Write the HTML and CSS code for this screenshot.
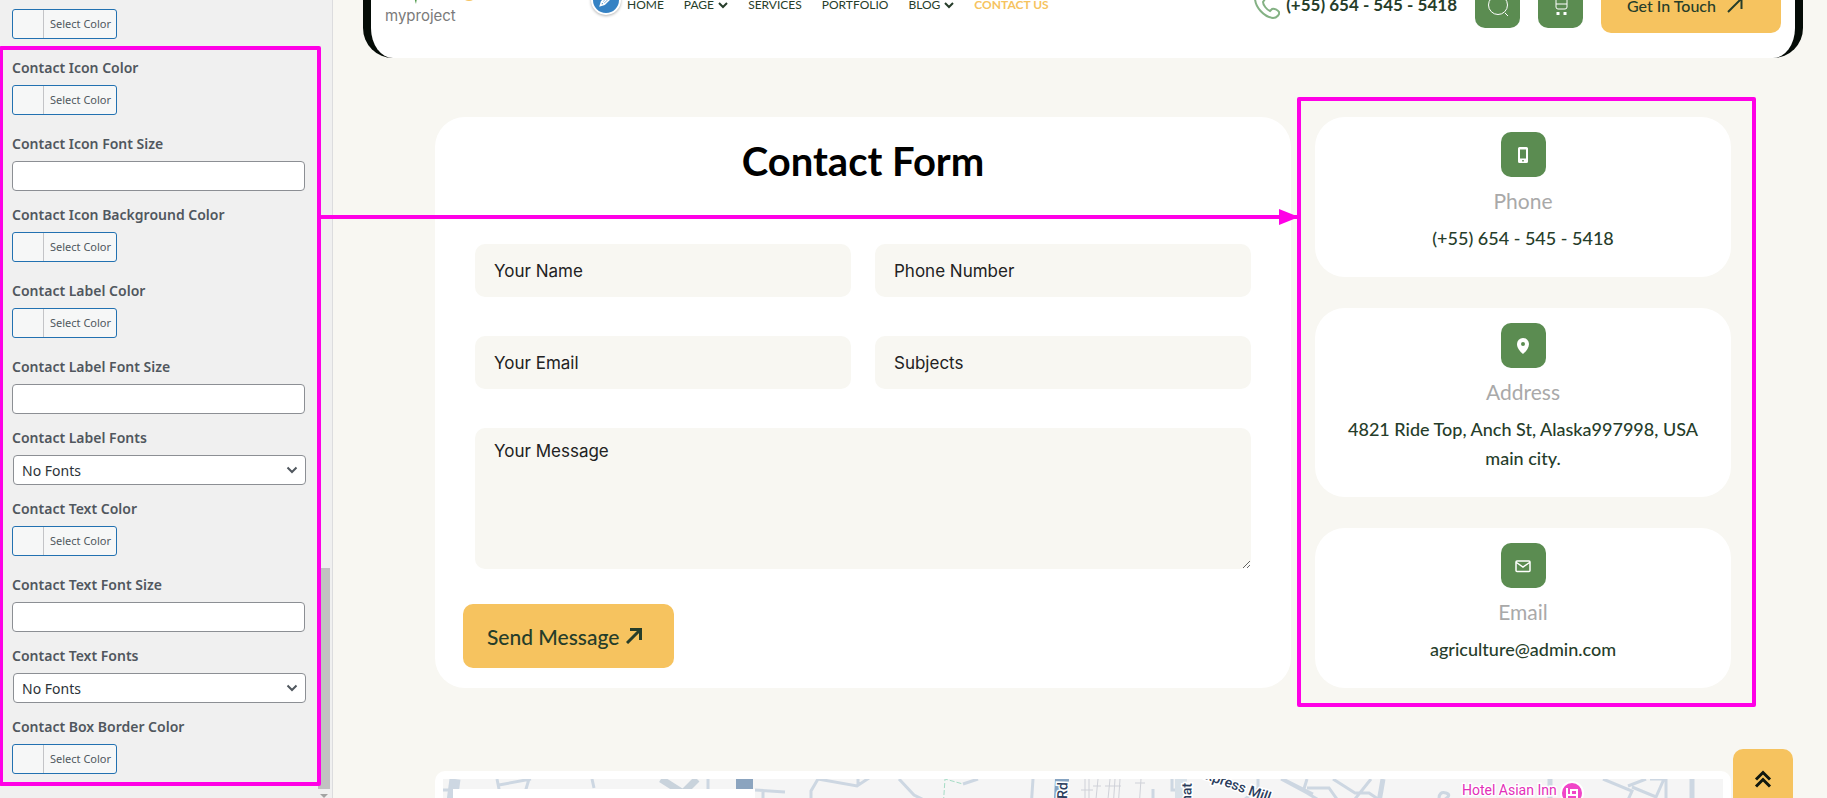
FILE: index.html
```html
<!DOCTYPE html>
<html lang="en">
<head>
  <meta charset="UTF-8" />
  <meta name="viewport" content="width=device-width, initial-scale=1.0" />
  <title>Contact Us - myproject</title>
  <link rel="stylesheet" href="styles.css">
</head>
<body>

  <div class="layout">
    <aside class="sidebar">
      <div class="control color">
        <button type="button" class="color-button" aria-label="Select Color"><span class="swatch"></span><span class="color-text">Select Color</span></button>
      </div>
      <div class="control color">
        <label for="iconColor">Contact Icon Color</label>
        <button type="button" id="iconColor" class="color-button"><span class="swatch"></span><span class="color-text">Select Color</span></button>
      </div>
      <div class="control">
        <label for="iconSize">Contact Icon Font Size</label>
        <input type="text" id="iconSize" class="text-input">
      </div>
      <div class="control color">
        <label for="iconBg">Contact Icon Background Color</label>
        <button type="button" id="iconBg" class="color-button"><span class="swatch"></span><span class="color-text">Select Color</span></button>
      </div>
      <div class="control color">
        <label for="labelColor">Contact Label Color</label>
        <button type="button" id="labelColor" class="color-button"><span class="swatch"></span><span class="color-text">Select Color</span></button>
      </div>
      <div class="control">
        <label for="labelSize">Contact Label Font Size</label>
        <input type="text" id="labelSize" class="text-input">
      </div>
      <div class="control">
        <label for="labelFont">Contact Label Fonts</label>
        <div class="select-box">
          <select id="labelFont"><option>No Fonts</option></select>
          <svg class="select-arrow" viewBox="0 0 12 8"><path d="M1.500 1.500 6 6l4.500-4.500"/></svg>
        </div>
      </div>
      <div class="control color">
        <label for="textColor">Contact Text Color</label>
        <button type="button" id="textColor" class="color-button"><span class="swatch"></span><span class="color-text">Select Color</span></button>
      </div>
      <div class="control">
        <label for="textSize">Contact Text Font Size</label>
        <input type="text" id="textSize" class="text-input">
      </div>
      <div class="control">
        <label for="textFont">Contact Text Fonts</label>
        <div class="select-box">
          <select id="textFont"><option>No Fonts</option></select>
          <svg class="select-arrow" viewBox="0 0 12 8"><path d="M1.500 1.500 6 6l4.500-4.500"/></svg>
        </div>
      </div>
      <div class="control color">
        <label for="borderColor">Contact Box Border Color</label>
        <button type="button" id="borderColor" class="color-button"><span class="swatch"></span><span class="color-text">Select Color</span></button>
      </div>
      <div class="scroll-thumb"></div>
      <div class="scroll-arrow"></div>
    </aside>

    <main class="preview">
      <header class="site-header">
        <a href="#" class="brand">
          <svg class="brand-mark" viewBox="0 0 100 22">
            <path d="M28 0c0 9 1 16 3 22 1-7 2-9 5-13l-4 3-1-12z" fill="#4f9a4a"/>
            <path d="M33 15c2 2 4 1 6-1" fill="none" stroke="#b9c9b5"/>
            <circle cx="84" cy="11" r="8" fill="#f6c35f"/>
          </svg>
          <span>myproject</span>
        </a>
        <nav class="menu">
          <span class="edit-badge">
            <svg viewBox="0 0 20 20"><path d="M3 17l1.500-5L13 3.500 16.500 7 8 15.500z"/><path d="M5 12l3 3M6.500 13.500l7-7"/></svg>
          </span>
          <a href="#">HOME</a>
          <a href="#">PAGE <svg viewBox="0 0 10 7"><path d="M1 1l4 4 4-4"/></svg></a>
          <a href="#">SERVICES</a>
          <a href="#">PORTFOLIO</a>
          <a href="#">BLOG <svg viewBox="0 0 10 7"><path d="M1 1l4 4 4-4"/></svg></a>
          <a href="#" class="current">CONTACT US</a>
        </nav>
        <div class="tools">
          <a href="#" class="phone-link">
            <svg viewBox="0 0 26 28"><path d="M8 2C5 0 1 3 1 7c0 9 9 19 18 20 4 0 7-4 6-6-1-2-5-4-7-3l-2 2c-3-1-7-6-7-9l2-3c0-2-1-5-3-6z"/></svg>
            <span>(+55) 654 - 545 - 5418</span>
          </a>
          <button type="button" class="tool-button" aria-label="Search">
            <svg viewBox="0 0 24 24"><circle cx="12" cy="12" r="9.500"/><path d="M19 20l3 3"/></svg>
          </button>
          <button type="button" class="tool-button" aria-label="Cart">
            <svg viewBox="0 0 24 24"><path d="M3 2h4v12q0 2 2 2h7q2 0 2-2V6H7M7 11h11"/><path d="M9 19v3M16 19v3" stroke-width="3"/></svg>
          </button>
          <a href="#" class="touch-button">Get In Touch
            <svg class="arrow" viewBox="0 0 16 16"><path d="M1 15 14 2M4 1.500h10.500V12"/></svg>
          </a>
        </div>
      </header>

      <section class="contact">
        <form class="contact-form">
          <h2>Contact Form</h2>
          <div class="fields">
            <input type="text" placeholder="Your Name" aria-label="Your Name">
            <input type="tel" placeholder="Phone Number" aria-label="Phone Number">
            <input type="email" placeholder="Your Email" aria-label="Your Email">
            <input type="text" placeholder="Subjects" aria-label="Subjects">
            <textarea placeholder="Your Message" aria-label="Your Message"></textarea>
          </div>
          <button type="submit" class="send-button">Send Message
            <svg class="arrow" viewBox="0 0 16 16"><path d="M1 15 14 2M4 1.500h10.500V12"/></svg>
          </button>
        </form>

        <div class="cards">
          <div class="card">
            <span class="card-icon">
              <svg viewBox="0 0 16 16"><path fill-rule="evenodd" d="M4.500 0h7a1.500 1.500 0 0 1 1.500 1.500v13a1.500 1.500 0 0 1-1.500 1.500h-7A1.500 1.500 0 0 1 3 14.500v-13A1.500 1.500 0 0 1 4.500 0zM5 2.500v9h6v-9zM7.200 13v1.600h1.600V13z"/></svg>
            </span>
            <h3>Phone</h3>
            <p>(+55) 654 - 545 - 5418</p>
          </div>
          <div class="card">
            <span class="card-icon">
              <svg viewBox="0 0 16 16"><path fill-rule="evenodd" d="M8 0a6 6 0 0 1 6 6c0 4-3 7.500-6 10-3-2.500-6-6-6-10a6 6 0 0 1 6-6zM8 4a2 2 0 1 0 0 4 2 2 0 0 0 0-4z"/></svg>
            </span>
            <h3>Address</h3>
            <p>4821 Ride Top, Anch St, Alaska997998, USA main city.</p>
          </div>
          <div class="card">
            <span class="card-icon">
              <svg viewBox="0 0 16 16"><path class="line" d="M2 3h12q1 0 1 1v8.500q0 1-1 1H2q-1 0-1-1V4q0-1 1-1zM1.500 4.500 8 9l6.500-4.500"/></svg>
            </span>
            <h3>Email</h3>
            <p>agriculture@admin.com</p>
          </div>
        </div>
      </section>

      <section class="map">
        <svg viewBox="0 0 1280 60" preserveAspectRatio="xMidYMin slice">
          <rect width="1280" height="60" fill="#f5f5f5"/>
          <g fill="none" stroke="#cdd7e2" stroke-width="3">
            <path d="M12 0 4 60" stroke-width="11"/>
            <path d="M0 11h8M54 0l4 20M56 6 88 0M86 0l-6 20M149 0l2 9"/>
            <path d="M218 0l22 14 14-14" stroke-width="7" stroke="#c9d3dc"/>
            <path d="M312 11l30 2M320 11v20M265 0v20M375 0l-7 12v20M375 0l39 7 12-8M415 6V0M456 0l15 16 12 6M535 0 520 5M590 0l-2 30M729 0v11h12M710 10v20M815 0v9l-14 12M840 0l30 15"/>
            <path d="M838 0l26 14 20 12M864 9h22l10 14M860 13l4-13M890 0l22 14h14l12 8M928 0l-16 20M996 20q0-8 7-6t-4 8"/>
            <path d="M940 0l-7 40M1107 0v30M1249 0v30" stroke-width="5"/>
            <path d="M1160 0l29 12-8 18M1185 7l18-7M1189 8l24 10 8-18M1207 0h16v24"/>
          </g>
          <g stroke="#cfd1d8" fill="none">
            <path d="M642 0v30M646 0v30M655 0l-3 30M667 0l-3 30M672 0l-2 30M677 0l-2 30M698 0l-2 30"/>
            <path d="M638 11h12M650 7h8M662 7h16M692 4h10"/>
          </g>
          <path d="M500 30l2-30 18 5" fill="none" stroke="#a5dcc5" stroke-dasharray="5 2"/>
          <path d="M612 0h14l-3 60h-14z" fill="#86a3c1"/>
          <path d="M293 0h17v11h-17z" fill="#8ba4bf"/>
          <path d="M732 0h12v60h-12z" fill="#d8e1e8"/>
          <rect x="10" y="10" width="302" height="50" fill="#fff"/>
          <g class="road">
            <text transform="translate(624 20) rotate(-88)">Rd</text>
            <text transform="translate(748 24) rotate(-88)">hat</text>
            <text transform="translate(762 0) rotate(20)">xpress Mill</text>
          </g>
          <g class="place">
            <text x="1019" y="16">Hotel Asian Inn</text>
            <text x="1043" y="31">Tiny Center</text>
          </g>
          <circle cx="1129" cy="14" r="11" fill="#f046c8" stroke="#fff" stroke-width="2"/>
          <path d="M1124 9v10M1124 16h10v3M1128 15v-4h6v5" fill="none" stroke="#fff" stroke-width="2"/>
        </svg>
      </section>

      <a href="#" class="to-top" aria-label="Back to top">
        <svg viewBox="0 0 18 18"><path d="M2 9.500 9 2.500l7 7M2 16.500 9 9.500l7 7"/></svg>
      </a>
    </main>
  </div>

  <!-- callouts that tie the settings to the contact boxes -->
  <div class="callout callout-settings"></div>
  <div class="callout callout-cards"></div>
  <div class="callout-line"></div>

</body>
</html>
```

FILE: styles.css
```css
* {
  box-sizing: border-box;
}

body {
  margin: 0;
  background-color: #f8f7f2;
  font-family: Lato, sans-serif;
  color: #263d2a;
  overflow: hidden;
}

a {
  color: inherit;
  text-decoration: none;
}

.layout {
  display: flex;
  height: 100vh;
  overflow: hidden;
}

/* settings panel */

.sidebar {
  position: relative;
  flex: 0 0 333px;
  padding: 9px 27px 0 12px;
  background: #f0f0f0;
  border-right: 1px solid #dcdcde;
  font-family: "Noto Sans", sans-serif;
}

.control {
  margin-bottom: 12px;
}

.control.color {
  margin-bottom: 17px;
}

.control label {
  display: block;
  margin-bottom: 5px;
  font-size: 14px;
  font-weight: 600;
  line-height: 24px;
  color: #50575e;
}

.color-button {
  display: flex;
  height: 30px;
  padding: 0;
  background: #f6f7f7;
  border: 1px solid #2271b1;
  border-radius: 3px;
  font-family: inherit;
  color: #50575e;
}

.swatch {
  width: 31px;
  height: 28px;
  border-right: 1px solid #c3c4c7;
}

.color-text {
  padding: 0 5px 0 6px;
  font-size: 11px;
  line-height: 28px;
}

.text-input,
.select-box select {
  display: block;
  width: 100%;
  height: 30px;
  padding: 0 8px;
  background: #fff;
  border: 1px solid #8c8f94;
  border-radius: 4px;
}

.select-box {
  position: relative;
  margin: 0 -1px 0 1px;
}

.select-box select {
  appearance: none;
  font-family: inherit;
  font-size: 14px;
  color: #2c3338;
}

.select-arrow {
  position: absolute;
  top: 11px;
  right: 8px;
  width: 12px;
  height: 8px;
  fill: none;
  stroke: #50575e;
  stroke-width: 2;
  pointer-events: none;
}

.scroll-thumb {
  position: absolute;
  right: 2px;
  bottom: 9px;
  width: 12px;
  height: 221px;
  background: #c1c1c1;
}

.scroll-arrow {
  position: absolute;
  right: 4px;
  bottom: 0;
  border: 4px solid transparent;
  border-top-color: #a3a3a3;
  border-bottom: 0;
}

/* site preview */

.preview {
  flex: 1;
  min-width: 0;
  padding-left: 6px;
  overflow: hidden;
}

.site-header {
  display: flex;
  align-items: center;
  height: 104px;
  margin: -46px 24px 59px;
  padding: 0 14px 2px;
  background: #fff;
  border: 0 solid #050c07;
  border-width: 0 8px;
  border-radius: 30px;
}

.brand {
  flex: 0 0 242px;
  font-family: Inter, sans-serif;
  font-size: 15px;
  line-height: 24px;
  color: #7a7a7a;
}

.brand-mark {
  display: block;
  width: 100px;
  height: 22px;
}

.menu {
  position: relative;
  display: flex;
  gap: 20px;
  font-size: 12px;
  line-height: 14px;
}

.menu a svg {
  width: 10px;
  height: 7px;
  margin-left: 1px;
  fill: none;
  stroke: #263d2a;
  stroke-width: 2;
}

.menu .current {
  color: #f6c35f;
  font-weight: 700;
}

.edit-badge {
  position: absolute;
  left: -36px;
  top: -13px;
  width: 30px;
  height: 30px;
  padding: 5px;
  background: #3582c4;
  border: 2px solid #fff;
  border-radius: 50%;
  box-shadow: 0 1px 3px rgba(0,0,0,0.3);
}

.edit-badge svg {
  display: block;
  width: 16px;
  height: 16px;
  fill: none;
  stroke: #fff;
  stroke-width: 2;
}

.tools {
  display: flex;
  align-items: center;
  gap: 18px;
  margin-left: auto;
}

.phone-link {
  display: flex;
  align-items: center;
  gap: 6px;
  font-size: 17px;
  font-weight: 700;
  line-height: 20px;
}

.phone-link svg {
  width: 26px;
  height: 28px;
  fill: none;
  stroke: #84b184;
  stroke-width: 2;
}

.tool-button {
  display: flex;
  align-items: center;
  justify-content: center;
  width: 45px;
  height: 45px;
  padding: 0;
  background: #5b8c51;
  border: none;
  border-radius: 10px;
}

.tool-button svg {
  width: 24px;
  height: 24px;
  fill: none;
  stroke: #fff;
  stroke-width: 1;
}

.touch-button {
  display: flex;
  align-items: center;
  gap: 11px;
  width: 180px;
  height: 55px;
  padding: 0 26px;
  background: #f6c35f;
  border-radius: 10px;
  font-size: 16px;
  font-weight: 500;
}

.arrow {
  width: 16px;
  height: 16px;
  fill: none;
  stroke: #263d2a;
  stroke-width: 2;
}

.contact {
  display: flex;
  gap: 24px;
  margin: 0 96px 83px;
}

.contact-form {
  flex: 1;
  padding: 20px 28px;
  background: #fff;
  border-radius: 30px;
}

.contact-form h2 {
  margin: 0 0 59px;
  font-size: 40px;
  line-height: 48px;
  text-align: center;
  color: #000;
}

.fields {
  display: grid;
  grid-template-columns: 1fr 1fr;
  gap: 39px 24px;
  padding: 0 12px;
  margin-bottom: 35px;
}

.fields input,
.fields textarea {
  width: 100%;
  height: 53px;
  padding: 1px 19px 0;
  background: #f8f7f2;
  border: none;
  border-radius: 10px;
  font-family: Inter, sans-serif;
  font-size: 17px;
}

.fields textarea {
  grid-column: 1 / 3;
  height: 141px;
  padding: 11px 19px;
  line-height: 24px;
  resize: both;
}

.fields ::placeholder {
  color: #222;
}

.send-button {
  display: flex;
  align-items: center;
  gap: 7px;
  height: 64px;
  padding: 0 32px 0 24px;
  background: #f6c35f;
  border: none;
  border-radius: 10px;
  font-family: inherit;
  font-size: 21px;
  font-weight: 500;
  color: #263d2a;
}

.send-button .arrow {
  stroke-width: 3;
}

.cards {
  flex: 0 0 416px;
  display: flex;
  flex-direction: column;
  gap: 31px;
}

.card {
  padding: 15px 24px 24px;
  background: #fff;
  border-radius: 30px;
  text-align: center;
}

.card-icon {
  display: flex;
  align-items: center;
  justify-content: center;
  width: 45px;
  height: 45px;
  margin: 0 auto;
  background: #5b8c51;
  border-radius: 10px;
}

.card-icon svg {
  width: 16px;
  height: 16px;
  fill: #fff;
}

.card-icon .line {
  fill: none;
  stroke: #fff;
  stroke-width: 1.5;
}

.card h3 {
  margin: 11px 0;
  font-size: 21px;
  font-weight: 400;
  line-height: 25px;
  color: #a9a9a9;
}

.card p {
  margin: 0;
  font-size: 18px;
  font-weight: 500;
  line-height: 29px;
}

.map {
  margin: 0 96px;
  padding: 8px;
  background: #fff;
  border-radius: 10px;
}

.map svg {
  display: block;
  width: 100%;
  height: 60px;
}

.map text {
  font-family: Roboto, sans-serif;
  font-size: 14px;
  paint-order: stroke;
  stroke: #fff;
  stroke-width: 3px;
}

.map .road text {
  fill: #2b3d5c;
  font-weight: 500;
}

.map .place text {
  fill: #e32fb9;
}

.to-top {
  position: fixed;
  right: 34px;
  bottom: -11px;
  display: flex;
  align-items: center;
  justify-content: center;
  width: 60px;
  height: 60px;
  background: #f6c35f;
  border-radius: 10px;
}

.to-top svg {
  width: 18px;
  height: 18px;
  fill: none;
  stroke: #10180f;
  stroke-width: 3;
}

/* callouts */

.callout {
  position: absolute;
  border: 4px solid #ff00e6;
  border-radius: 2px;
  pointer-events: none;
}

.callout-settings {
  top: 46px;
  left: -1px;
  width: 322px;
  height: 740px;
}

.callout-cards {
  top: 97px;
  right: 71px;
  width: 459px;
  height: 610px;
}

.callout-line {
  position: absolute;
  top: 215px;
  left: 321px;
  right: 530px;
  height: 4px;
  background: #ff00e6;
}

.callout-line::after {
  content: "";
  position: absolute;
  top: -6px;
  right: -2px;
  border: 8px solid transparent;
  border-left: 20px solid #ff00e6;
  border-right: 0;
}
```
